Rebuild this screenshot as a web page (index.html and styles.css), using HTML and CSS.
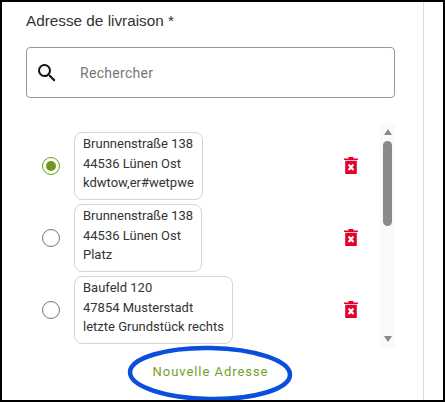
FILE: index.html
```html
<!DOCTYPE html>
<html lang="fr">
<head>
<meta charset="utf-8">
<title>Adresse de livraison</title>
<link rel="stylesheet" href="styles.css">
</head>
<body>
<div class="frame">
  <section class="panel">
    <h2 class="label">Adresse de livraison *</h2>
    <div class="search">
      <svg class="search-icon" width="24" height="24" viewBox="0 0 24 24"><path fill="#111" d="M15.5 14h-.79l-.28-.27A6.47 6.47 0 0 0 16 9.5 6.5 6.5 0 1 0 9.500 16c1.610 0 3.090-.59 4.230-1.570l.27.28v.79l5 4.990L20.490 19l-4.990-5zm-6 0C7.010 14 5 11.990 5 9.500S7.010 5 9.500 5 14 7.010 14 9.500 11.990 14 9.500 14z"/></svg>
      <span class="placeholder">Rechercher</span>
    </div>
    <div class="list">
      <div class="rows">
        <div class="row">
          <span class="radio radio-on"></span>
          <div class="card"><div>Brunnenstraße 138</div><div>44536 Lünen Ost</div><div>kdwtow,er#wetpwe</div></div>
          <svg class="trash" width="14" height="17" viewBox="0 0 14 17"><path fill="#e8002c" d="M0 1.400h14V3H0zM4.500 0h5v1.400h-5zM1.200 3.800h11.600V17H1.200z"/><path stroke="#fff" stroke-width="2.100" d="M4.600 7.500l4.800 5.500M9.400 7.500l-4.800 5.500"/></svg>
        </div>
        <div class="row">
          <span class="radio"></span>
          <div class="card"><div>Brunnenstraße 138</div><div>44536 Lünen Ost</div><div>Platz</div></div>
          <svg class="trash" width="14" height="17" viewBox="0 0 14 17"><path fill="#e8002c" d="M0 1.400h14V3H0zM4.500 0h5v1.400h-5zM1.200 3.800h11.600V17H1.200z"/><path stroke="#fff" stroke-width="2.100" d="M4.600 7.500l4.800 5.500M9.400 7.500l-4.800 5.500"/></svg>
        </div>
        <div class="row">
          <span class="radio"></span>
          <div class="card"><div>Baufeld 120</div><div>47854 Musterstadt</div><div>letzte Grundstück rechts</div></div>
          <svg class="trash" width="14" height="17" viewBox="0 0 14 17"><path fill="#e8002c" d="M0 1.400h14V3H0zM4.500 0h5v1.400h-5zM1.200 3.800h11.600V17H1.200z"/><path stroke="#fff" stroke-width="2.100" d="M4.600 7.500l4.800 5.500M9.400 7.500l-4.800 5.500"/></svg>
        </div>
      </div>
      <div class="scrollbar">
        <span class="arrow arrow-up"></span>
        <span class="thumb"></span>
        <span class="arrow arrow-down"></span>
      </div>
    </div>
    <div class="action">
      <span class="new-address">Nouvelle Adresse</span>
      <svg class="ring" width="172" height="60" viewBox="0 0 172 60"><ellipse cx="86" cy="31.500" rx="80" ry="25.500" fill="none" stroke="#0a4fdc" stroke-width="4.500" transform="rotate(1 86 31.500)"/></svg>
    </div>
  </section>
</div>
</body>
</html>
```
FILE: styles.css
```css
* { box-sizing: border-box; }
html, body { margin: 0; padding: 0; background: #fff; }
.frame {
  width: 445px;
  height: 402px;
  border: 2px solid #000;
  overflow: hidden;
  font-family: Roboto, "Liberation Sans", sans-serif;
}
.panel {
  width: 422px;
  height: 398px;
  border-right: 1px solid #dcdcdc;
  padding: 9px 28px 0 24px;
}
.label {
  margin: 0;
  font-family: "Liberation Sans", Arial, sans-serif;
  font-size: 15.3px;
  font-weight: 400;
  line-height: 20px;
  color: #333;
}
.search {
  margin-top: 16px;
  height: 51px;
  border: 1px solid #999;
  border-radius: 4px;
  display: flex;
  align-items: center;
  padding-left: 8px;
}
.search-icon { flex: none; }
.placeholder {
  margin-left: 21px;
  font-size: 14px;
  letter-spacing: .3px;
  color: #777;
}
.list {
  margin-top: 25px;
  display: flex;
  height: 225px;
}
.rows {
  width: 354px;
  padding: 9px 22px 0 0;
  display: flex;
  flex-direction: column;
  gap: 4px;
}
.row {
  display: flex;
  align-items: center;
  height: 68px;
}
.radio {
  flex: none;
  width: 18px;
  height: 18px;
  margin: 0 14px 0 16px;
  border: 1px solid #777;
  border-radius: 50%;
  display: flex;
  align-items: center;
  justify-content: center;
}
.radio-on { border-color: #6f9a1f; }
.radio-on::before {
  content: "";
  width: 10px;
  height: 10px;
  border-radius: 50%;
  background: #6f9a1f;
}
.card {
  flex: none;
  height: 68px;
  padding: 1px 7.75px 0 8px;
  border: 1px solid #d4d4d4;
  border-radius: 8px;
  font-size: 13px;
  line-height: 19.5px;
  color: #333;
}
.trash { flex: none; margin-left: auto; margin-top: -1px; }
.scrollbar {
  width: 15px;
  background: #fafafa;
  display: flex;
  flex-direction: column;
  align-items: center;
  padding-top: 6px;
}
.arrow {
  width: 0;
  height: 0;
  border-left: 4.5px solid transparent;
  border-right: 4.5px solid transparent;
}
.arrow-up { border-bottom: 6px solid #888; }
.arrow-down { border-top: 6px solid #888; margin-top: 110px; }
.thumb {
  width: 9px;
  height: 85px;
  margin-top: 6px;
  border-radius: 5px;
  background: #8a8a8a;
}
.action {
  position: relative;
  display: flex;
  justify-content: center;
  margin-top: 15px;
}
.new-address {
  font-size: 13px;
  font-weight: 400;
  line-height: 18px;
  letter-spacing: .95px;
  color: #74a02a;
}
.ring {
  position: absolute;
  left: 98px;
  top: -21px;
}
```
